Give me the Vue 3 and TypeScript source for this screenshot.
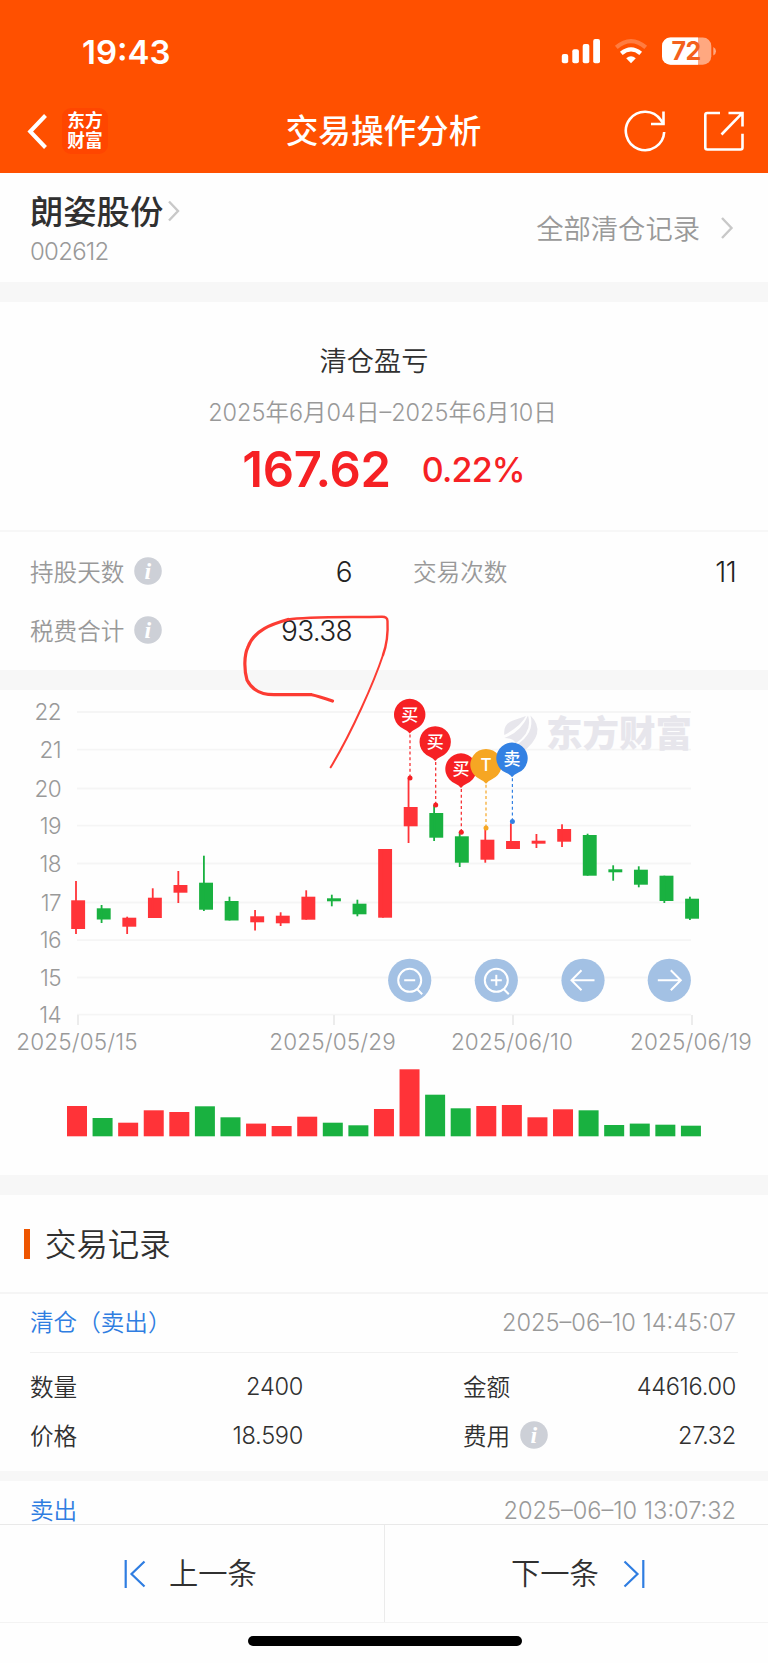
<script setup lang="ts">
interface Candle { up: boolean; top: number; bottom: number; high: number; low: number; volume: number }
interface Pin { x: number; y: number; dotX: number; dotY: number; label: string; color: string }

const candle = (up: number, top: number, bottom: number, high: number, low: number, volume: number): Candle =>
  ({ up: up === 1, top, bottom, high, low, volume })

// Price extents in chart coordinates, followed by the height of the volume bar.
const candles: Candle[] = [
  candle(1, 210.3, 239, 191, 244, 30.3),
  candle(0, 218.3, 229.5, 215, 233, 18.3),
  candle(1, 227.7, 236.7, 226.7, 244, 13.6),
  candle(1, 207.7, 228, 198.3, 228, 26),
  candle(1, 195, 202.7, 181, 213, 24.3),
  candle(0, 192.7, 219.7, 165.7, 221, 30),
  candle(0, 211, 230.5, 206.7, 230.5, 19),
  candle(1, 226.3, 232.3, 220, 240.5, 12.7),
  candle(1, 225.7, 233.3, 222.3, 236, 10.3),
  candle(1, 206.7, 229.7, 200.3, 229.7, 19.6),
  candle(0, 208.3, 211.3, 204.7, 216.3, 13.6),
  candle(0, 213.7, 224.3, 209.7, 226.3, 11),
  candle(1, 159, 227.7, 159, 227.7, 27.3),
  candle(1, 117, 136.3, 88, 153, 67),
  candle(0, 123, 147.7, 115, 151, 41.6),
  candle(0, 146.3, 172.7, 142, 177, 28),
  candle(1, 149.7, 169.7, 138, 172.7, 30.3),
  candle(1, 151, 159, 133.3, 159, 31.3),
  candle(1, 150.7, 153.7, 144, 158, 19),
  candle(1, 139, 151.7, 134.3, 157, 27),
  candle(0, 145, 185.7, 143.7, 185.7, 26),
  candle(0, 179.3, 182.3, 175.3, 190.7, 11.3),
  candle(0, 179.7, 194.7, 176.3, 197.3, 12.7),
  candle(0, 185.7, 211, 185.7, 213, 11.6),
  candle(0, 208.7, 228.7, 206.7, 230, 10.6),
]
const pins: Pin[] = [
  { x: 409.7, y: 24.5, dotX: 410, dotY: 88, label: '买', color: '#f62124' },
  { x: 435.2, y: 51.9, dotX: 435.7, dotY: 115, label: '买', color: '#f62124' },
  { x: 461, y: 79, dotX: 461.3, dotY: 142.3, label: '买', color: '#f62124' },
  { x: 486, y: 74.7, dotX: 486, dotY: 138, label: 'T', color: '#f6a623' },
  { x: 512, y: 68.3, dotX: 512.4, dotY: 131.5, label: '卖', color: '#3381e3' },
]
const grid = [
  { price: 22, y: 22 }, { price: 21, y: 59.7 }, { price: 20, y: 98.5 }, { price: 19, y: 135.7 }, { price: 18, y: 173.5 },
  { price: 17, y: 212.5 }, { price: 16, y: 250.2 }, { price: 15, y: 287.5 }, { price: 14, y: 324.7 },
]
const dates = [
  { x: 77, tick: 78, text: '2025/05/15' }, { x: 332.5, tick: 334, text: '2025/05/29' },
  { x: 512, tick: 513, text: '2025/06/10' }, { x: 691, tick: 692, text: '2025/06/19' },
]
const tools = [
  { x: 409.7, kind: 'out' }, { x: 496.3, kind: 'in' }, { x: 583, kind: 'left' }, { x: 669.3, kind: 'right' },
]
const fill = (up: boolean) => (up ? '#ff3338' : '#19b140')
</script>

<template>
  <div class="screen">
    <header class="header">
      <div class="status">
        <span class="clock">19:43</span>
        <svg class="status-icons" width="160" height="32" viewBox="556 35 160 32">
          <g fill="#fff">
            <rect x="561.8" y="54" width="6.4" height="9.2" rx="2" /><rect x="572.3" y="49.3" width="6.6" height="13.9" rx="2" />
            <rect x="582.7" y="44" width="6.6" height="19.2" rx="2" /><rect x="593.2" y="39" width="6.8" height="24.2" rx="2" />
            <path d="M631 63.2 L626.2 58.2 Q631 54.3 635.8 58.2 Z" />
          </g>
          <g fill="none" stroke="#fff" stroke-width="4.2">
            <path d="M621.3 53.4 Q631 45.3 640.7 53.4" /><path d="M616.3 47.4 Q631 34.8 645.7 47.4" opacity=".25" />
          </g>
          <rect x="662" y="37.5" width="49.3" height="27.3" rx="8.5" fill="#ffa880" />
          <path d="M670.5 37.5 H698 V64.8 H670.5 A8.5 8.5 0 0 1 662 56.3 V46 A8.5 8.5 0 0 1 670.5 37.5Z" fill="#fff" />
          <path d="M713.3 47 Q716 48.2 716 51.2 Q716 54.2 713.3 55.4Z" fill="#ffa880" />
          <text x="686" y="60.2" text-anchor="middle" class="battery">72</text>
        </svg>
      </div>
      <nav class="nav">
        <svg class="back" width="22" height="38" viewBox="0 0 22 38"><path d="M19.5 3.5 L4.2 19.5 L19.5 35.5" fill="none" stroke="#fff" stroke-width="4" /></svg>
        <div class="app-logo"><span>东方</span><span>财富</span></div>
        <h1 class="nav-title">交易操作分析</h1>
        <svg class="nav-icons" width="124" height="44" viewBox="622 108 124 44">
          <g fill="none" stroke="#fff" stroke-width="2.6">
            <path d="M664.2 131 A19.2 19.2 0 1 1 660.8 119 L663.5 123" /><path d="M663.5 110.5 V123 H651" />
            <path d="M720 112 H707.3 Q705.3 112 705.3 114 V146.5 Q705.3 148.5 707.3 148.5 H740.5 Q742.5 148.5 742.5 146.5 V132.7" />
            <path d="M728.5 112 H742.5 V125.5 M742 112.4 L721.5 133.5" />
          </g>
        </svg>
      </nav>
    </header>

    <section class="stock">
      <div>
        <div class="stock-name"><span>朗姿股份</span>
          <svg width="14" height="24" viewBox="0 0 14 24"><path d="M2 1.5 L11 11 L2 20.5" fill="none" stroke="#c8c8c8" stroke-width="2.4" /></svg>
        </div>
        <div class="stock-code">002612</div>
      </div>
      <div class="all-records"><span>全部清仓记录</span>
        <svg width="14" height="24" viewBox="0 0 14 24"><path d="M2 2 L11.5 12 L2 22" fill="none" stroke="#c8c8c8" stroke-width="2.4" /></svg>
      </div>
    </section>

    <section class="profit">
      <div class="profit-title">清仓盈亏</div>
      <div class="profit-range">2025年6月04日–2025年6月10日</div>
      <div class="profit-values"><strong>167.62</strong><b>0.22%</b></div>
    </section>

    <section class="stats">
      <div class="stat"><span>持股天数</span>
        <svg class="info" viewBox="0 0 28 28"><circle cx="14" cy="14" r="13.8" /><text x="13.8" y="22">i</text></svg><em>6</em>
      </div>
      <div class="stat"><span>交易次数</span><em>11</em></div>
      <div class="stat"><span>税费合计</span>
        <svg class="info" viewBox="0 0 28 28"><circle cx="14" cy="14" r="13.8" /><text x="13.8" y="22">i</text></svg><em>93.38</em>
      </div>
    </section>

    <section class="chart">
      <svg width="768" height="485" viewBox="0 0 768 485">
        <g v-for="g in grid" :key="g.price">
          <line x1="77" x2="691" :y1="g.y" :y2="g.y" stroke="#f5f5f5" stroke-width="1.8" />
          <text x="61" :y="g.y + 8" text-anchor="end" class="axis">{{ g.price }}</text>
        </g>
        <g v-for="d in dates" :key="d.text">
          <line :x1="d.tick" :x2="d.tick" y1="325" y2="335" stroke="#e9e9e9" stroke-width="1.7" />
          <text :x="d.x" y="360.3" text-anchor="middle" class="axis date">{{ d.text }}</text>
        </g>
        <g fill="#e7e6ec">
          <path d="M504.3 45 Q503 34 513 30.5 L526 26 Q521 36 504.3 45Z M504.3 48 Q521 42 528 25.5 Q533 42 515.5 53.5 Q514 48 504.3 48Z" />
          <path d="M530.5 25.5 Q548 43 521.5 63 Q519 58 516.5 55 Q535 43 530.5 25.5Z" />
          <text x="546" y="57" class="watermark">东方财富</text>
        </g>
        <g v-for="(c, i) in candles" :key="i" :fill="fill(c.up)">
          <rect :x="71.2 + i * 25.58" :y="c.top" width="13.9" :height="c.bottom - c.top" />
          <rect :x="75.1 + i * 25.58" :y="c.high" width="1.8" :height="c.low - c.high" />
          <rect :x="67 + i * 25.58" :y="446.3 - c.volume" width="20" :height="c.volume" />
        </g>
        <g v-for="(p, i) in pins" :key="'p' + i">
          <line :x1="p.dotX" :x2="p.dotX" :y1="p.y + 20" :y2="p.dotY" :stroke="p.color" stroke-width="1.2" stroke-dasharray="3 2.7" />
          <circle :cx="p.dotX" :cy="p.dotY" r="2.5" :fill="p.color" />
          <path :transform="`translate(${p.x} ${p.y})`" :fill="p.color" d="M0 19 Q-2 16 -6 14.5 A15.7 15.7 0 1 1 6 14.5 Q2 16 0 19Z" />
          <text :x="p.x" :y="p.y + 6.3" text-anchor="middle" :class="['pin', { latin: p.label === 'T' }]">{{ p.label }}</text>
        </g>
        <g v-for="t in tools" :key="t.kind" :transform="`translate(${t.x} 290.3)`" fill="none" stroke="#fff" stroke-width="2">
          <circle r="21.6" fill="#a3c1e4" stroke="none" />
          <g v-if="t.kind === 'out' || t.kind === 'in'">
            <circle r="11.5" /><path d="M-5.5 0 H5.5 M7.5 9 L12.5 14" /><path v-if="t.kind === 'in'" d="M0 -5.5 V5.5" />
          </g>
          <path v-else :transform="t.kind === 'left' ? 'scale(-1 1)' : ''" d="M-11.5 0 H11 M1.5 -10 L11.5 0 L1.5 10" />
        </g>
      </svg>
    </section>

    <section class="records">
      <h2><span>交易记录</span></h2>
      <div class="record-head"><span>清仓（卖出）</span><time>2025–06–10 14:45:07</time></div>
      <div class="record-body">
        <span>数量</span><em>2400</em><span class="second">金额</span><em>44616.00</em>
        <span>价格</span><em>18.590</em>
        <span class="second">费用<svg class="info" viewBox="0 0 28 28"><circle cx="14" cy="14" r="13.8" /><text x="13.8" y="22">i</text></svg></span><em>27.32</em>
      </div>
      <div class="record-head next"><span>卖出</span><time>2025–06–10 13:07:32</time></div>
    </section>

    <footer class="footer">
      <button class="previous">
        <svg width="22" height="30" viewBox="0 0 22 30"><path d="M1.7 1 V29 M20.5 2.5 L7.5 15 L20.5 27.5" fill="none" stroke="#2f7de1" stroke-width="2.2" /></svg><span>上一条</span>
      </button>
      <button class="following"><span>下一条</span>
        <svg width="22" height="30" viewBox="0 0 22 30"><path d="M20.3 1 V29 M1.5 2.5 L14.5 15 L1.5 27.5" fill="none" stroke="#2f7de1" stroke-width="2.2" /></svg>
      </button>
    </footer>
    <div class="home"><i></i></div>

    <svg class="scribble" width="160" height="164" viewBox="236 608 160 164" fill="none" stroke="#fc3c33" stroke-linecap="round" stroke-linejoin="round">
      <path stroke-width="3.2" d="M332.5 701 Q318 696 311.7 694.7 L275 694.7 C258 695 251 688 247 680 C244 670 244 655 248 647 C254 630 272 624 288 619.5" />
      <path stroke-width="2.4" d="M288 619.5 C305 616.5 345 617.3 381.7 616.7 Q387.5 616.5 387.5 621 Q388.5 640 383 655" />
      <path stroke-width="2" d="M383 655 C374 682 352 732 330.7 767.3" />
    </svg>
  </div>
</template>

<style>
body { margin: 0; background: #fff; }
</style>

<style scoped>
* { box-sizing: border-box; }
.screen { position: relative; width: 768px; height: 1663px; overflow: hidden; background: #fefefe; color: #303030; font-family: Inter, "Noto Sans CJK SC", sans-serif; display: flex; flex-direction: column; }
.screen svg { display: block; flex: none; }
em, i { font-style: normal; }
.header { height: 173px; flex: none; background: #ff5000; color: #fff; }
.status { height: 102px; display: flex; align-items: center; justify-content: space-between; padding: 0 52px 0 82px; }
.clock { font-size: 33px; font-weight: 600; padding-top: 1px; }
.battery { font: 700 25px Inter, sans-serif; fill: #f4611c; letter-spacing: -.7px; }
.nav { height: 57px; display: grid; grid-template-columns: 22px 46px 1fr 124px; align-items: center; padding: 0 22px 0 26px; }
.app-logo { width: 46px; height: 46px; margin-left: 14px; border-radius: 9px; background: #ff4600; display: flex; flex-direction: column; justify-content: center; align-items: center; font-weight: 700; font-size: 17.7px; line-height: 19.5px; }
.nav-title { margin: 0; text-align: center; font-size: 32.6px; line-height: 44px; font-weight: 500; padding-left: 51px; }
.stock { height: 129px; flex: none; display: flex; justify-content: space-between; padding: 17px 34px 0 30px; border-bottom: 20px solid #f7f7f7; }
.stock-name { display: flex; align-items: center; gap: 4px; font-size: 33.3px; font-weight: 500; line-height: 44px; }
.stock-code { font-size: 24px; line-height: 30px; letter-spacing: -.75px; color: #999; margin-top: 3px; font-weight: 350; }
.all-records { height: 76px; display: flex; align-items: center; gap: 20px; font-size: 27.3px; font-weight: 350; color: #999; }
.all-records span { padding-bottom: 3px; }
.profit { height: 230px; flex: none; border-bottom: 2px solid #f7f7f7; display: flex; flex-direction: column; align-items: center; padding-top: 40px; }
.profit-title { font-size: 27.2px; line-height: 40px; margin-right: 20px; font-weight: 350; }
.profit-range { font-size: 23.5px; line-height: 34px; margin: 14px 3px 0 0; color: #999; font-weight: 350; white-space: nowrap; }
.profit-values { display: flex; align-items: center; justify-content: center; gap: 31px; color: #f62124; margin: 10px 1px 0 0; line-height: 60px; }
.profit-values strong { font-size: 49px; font-weight: 600; letter-spacing: -.3px; }
.profit-values b { font-size: 34px; font-weight: 550; letter-spacing: -.8px; }
.stats { height: 158px; flex: none; display: grid; grid-template-columns: 322px 323px; grid-template-rows: 59px 59px; column-gap: 61px; padding: 10px 32px 0 30px; border-bottom: 20px solid #f7f7f7; }
.stat { display: flex; align-items: center; font-size: 23.6px; color: #999; font-weight: 350; }
.stat span { padding-bottom: 2px; }
.stat .info { position: relative; top: -1px; }
.stat em { margin-left: auto; color: #222; font-size: 28px; font-weight: 350; letter-spacing: -.7px; }
.info { width: 28px; height: 28px; margin-left: 10px; }
.info circle { fill: #cdd0d7; }
.info text { fill: #fff; font: italic bold 24px "Liberation Serif", serif; text-anchor: middle; }
.chart { height: 505px; flex: none; border-bottom: 20px solid #f7f7f7; }
.axis { font: 350 22.5px Inter, sans-serif; fill: #999; letter-spacing: -.6px; }
.date { letter-spacing: .15px; }
.watermark { font: 900 36.5px "Noto Sans CJK SC", sans-serif; }
.pin { font: 500 17px "Noto Sans CJK SC", sans-serif; fill: #fff; }
.pin.latin { font-family: Inter, sans-serif; }
.records { height: 329px; flex: none; overflow: hidden; }
.records h2 { height: 99px; margin: 0; padding-left: 24px; display: flex; align-items: center; gap: 15px; border-bottom: 2px solid #f5f5f5; font-size: 31.4px; font-weight: 350; }
.records h2 span { padding-bottom: 3px; }
.records h2::before { content: ""; width: 6px; height: 30px; background: #ee5500; }
.record-head { height: 59px; margin: 0 30px; padding: 0 2px 1px 0; display: flex; align-items: center; justify-content: space-between; font-size: 23.6px; line-height: 28px; border-bottom: 1px solid #f1f1f1; }
.record-head.next { height: 44px; padding: 15px 2px 0 0; line-height: 26px; border: 0; }
.record-head span { color: #2f7de1; font-weight: 350; }
.record-head time { color: #999; font-weight: 350; letter-spacing: 0; }
.record-body { height: 128px; padding: 9px 32px 0 30px; display: grid; grid-template-columns: 100px 173px 211px 222px; grid-template-rows: 49px 49px; align-items: center; font-size: 23.6px; font-weight: 350; border-bottom: 10px solid #f7f7f7; }
.record-body > span { padding-bottom: 1px; }
.record-body em { text-align: right; letter-spacing: -.3px; }
.second { margin-left: 160px; display: flex; align-items: center; white-space: nowrap; }
.footer { height: 99px; flex: none; display: grid; grid-template-columns: 385px 1fr; border-top: 1px solid #e9e9e9; border-bottom: 1px solid #f3f3f3; }
.footer button { border: 0; padding: 0; background: none; font: inherit; font-size: 29.3px; font-weight: 350; color: #303030; display: flex; align-items: center; gap: 23px; }
.footer button span { padding-bottom: 5px; }
.footer .previous { border-right: 1px solid #ebebeb; padding-left: 124px; }
.footer .following { padding-left: 126px; gap: 24px; }
.home { height: 40px; flex: none; display: flex; justify-content: center; padding: 13px 0 0 1px; }
.home i { width: 274px; height: 10px; border-radius: 5px; background: #000; }
.screen .scribble { position: absolute; left: 236px; top: 608px; }
</style>
